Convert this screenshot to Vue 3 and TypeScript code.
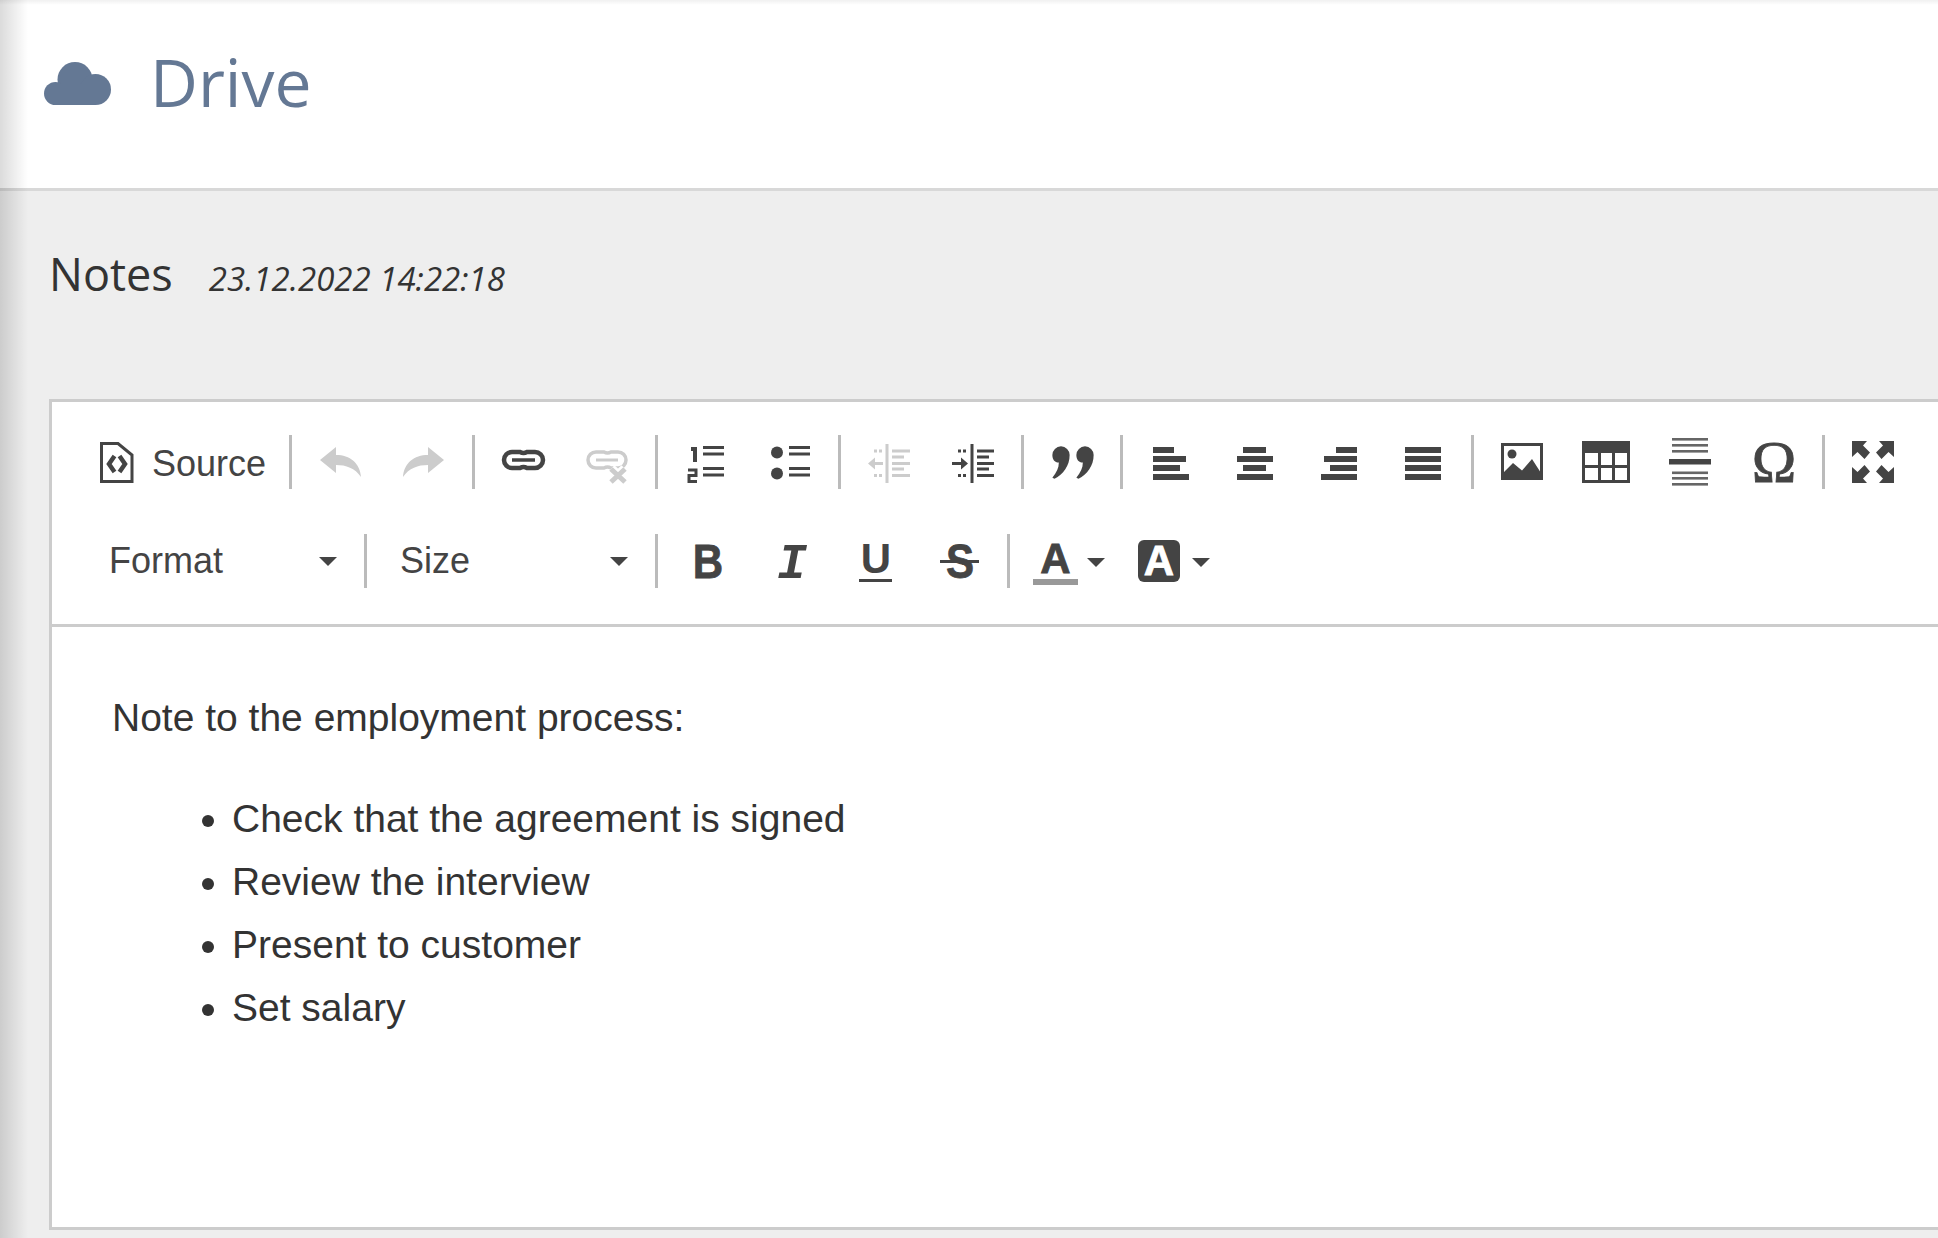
<script setup lang="ts">
  // [x, width] of the four bars in each align icon, in button coordinates
  const alignIcons: [number, number][][] = [
    [[24, 21], [24, 33], [24, 27], [24, 36]],
    [[30, 23], [24, 36], [30, 23], [24, 36]],
    [[39, 21], [27, 33], [33, 27], [24, 36]],
    [[24, 36], [24, 36], [24, 36], [24, 36]],
  ];
  const barTops = [12, 21, 30, 39];
  const hrLines = [3, 9, 15, 36.5, 42, 48];
  const tasks = ['Check that the agreement is signed', 'Review the interview', 'Present to customer', 'Set salary'];
</script>

<template>
  <div class="page">
    <header class="topbar">
      <svg class="cloud" viewBox="0 0 67 43" fill="currentColor">
        <circle cx="31" cy="17.5" r="17.5" />
        <circle cx="51.5" cy="27.5" r="15.5" />
        <circle cx="11.5" cy="31.5" r="11.5" />
        <rect x="11.5" y="22" width="40" height="21" />
      </svg>
      <h1 class="title">Drive</h1>
    </header>

    <main class="content">
      <div class="doc-head">
        <span class="doc-name">Notes</span>
        <span class="doc-date">23.12.2022 14:22:18</span>
      </div>

      <section class="editor">
        <div class="toolbar">
          <div class="row">
            <div class="source">
              <svg class="source-icon" viewBox="0 0 34 54" fill="none" stroke="currentColor">
                <path d="M1.5 8.5 H18 L32 20 V46.5 H1.5 Z" stroke-width="3" />
                <path d="M14.5 21 L9 29 L14.5 37 M19.5 21 L25 29 L19.5 37" stroke-width="4.5" />
              </svg>
              <span class="source-label">Source</span>
            </div>
            <i class="sep"></i>

            <svg class="icon off" viewBox="0 0 84 54" fill="currentColor">
              <path d="M22 25 L38 12 V20 C52 20 62 28 63 42 C57 33 48 30 38 30 V38 Z" />
            </svg>
            <svg class="icon off" viewBox="0 0 84 54" fill="currentColor">
              <path d="M62 25 L46 12 V20 C32 20 22 28 21 42 C27 33 36 30 46 30 V38 Z" />
            </svg>
            <i class="sep"></i>

            <svg class="icon" viewBox="0 0 84 54" fill="none" stroke="currentColor">
              <path d="M31 17 H39 Q42.5 19 46 17 H54 a8 8 0 0 1 0 16 H46 Q42.5 31 39 33 H31 a8 8 0 0 1 0 -16 Z" stroke-width="4.5" />
              <path d="M31 25 H54" stroke-width="3.5" />
            </svg>
            <svg class="icon off" viewBox="0 0 84 54" fill="none" stroke="currentColor">
              <path d="M31 17 H39 Q42.5 19 46 17 H53 a8 8 0 0 1 0 16 H46 Q42.5 31 39 33 H31 a8 8 0 0 1 0 -16 Z" stroke-width="3.5" />
              <path d="M31 25 H53" stroke-width="3" />
              <path d="M46 34 L60 47 M60 34 L46 47" stroke="#fff" stroke-width="10" />
              <path d="M46 34 L60 47 M60 34 L46 47" stroke-width="5" />
            </svg>
            <i class="sep"></i>

            <svg class="icon" viewBox="0 0 84 54" fill="none" stroke="currentColor" stroke-width="3">
              <path d="M39 12.5 H60 M39 19 H60 M39 33.5 H60 M39 40 H60" />
              <path d="M27 14 H31 V27" stroke-width="4" />
              <path d="M24 35 H32 V40.5 H25 V46.5 H33" />
            </svg>
            <svg class="icon" viewBox="0 0 84 54" fill="currentColor">
              <circle cx="29" cy="17.5" r="6" />
              <circle cx="29" cy="38.5" r="6" />
              <path d="M41 12.5 H62 M41 19 H62 M41 33.5 H62 M41 40 H62" stroke="currentColor" stroke-width="3" />
            </svg>
            <i class="sep"></i>

            <svg class="icon off" viewBox="0 0 84 54" fill="currentColor">
              <rect x="38.5" y="9" width="3" height="39" />
              <path d="M45 16 H63 M45 22 H57 M45 28.5 H63 M45 34 H57 M45 40.5 H63" stroke="currentColor" stroke-width="3" />
              <path d="M21 28.5 L28 22.5 V27 H36 V30 H28 V34.5 Z" />
              <path d="M27 14.5 h3 v3 h-3 z M32 14.5 h3 v3 h-3 z M27 39 h3 v3 h-3 z M32 39 h3 v3 h-3 z" />
            </svg>
            <svg class="icon" viewBox="0 0 84 54" fill="currentColor">
              <rect x="39.5" y="9" width="3" height="39" />
              <path d="M46 16 H63 M46 22 H58 M46 28.5 H63 M46 34 H58 M46 40.5 H63" stroke="currentColor" stroke-width="3" />
              <path d="M37 28.5 L30 22.5 V27 H21 V30 H30 V34.5 Z" />
              <path d="M27 14.5 h3 v3 h-3 z M32 14.5 h3 v3 h-3 z M27 39 h3 v3 h-3 z M32 39 h3 v3 h-3 z" />
            </svg>
            <i class="sep"></i>

            <svg class="icon" viewBox="0 0 84 54" fill="currentColor">
              <path transform="translate(31 20) scale(1.08)" d="M-8 0 a8 8 0 1 1 16 0 c0 10 -6 18 -14 22 l-2 -1 c4 -5 6 -9 6 -14 c-4 0 -6 -3 -6 -7 z" />
              <path transform="translate(55 20) scale(1.08)" d="M-8 0 a8 8 0 1 1 16 0 c0 10 -6 18 -14 22 l-2 -1 c4 -5 6 -9 6 -14 c-4 0 -6 -3 -6 -7 z" />
            </svg>
            <i class="sep"></i>

            <svg v-for="(bars, i) in alignIcons" :key="i" class="icon" viewBox="0 0 84 54" fill="currentColor">
              <rect v-for="(bar, j) in bars" :key="j" :x="bar[0]" :y="barTops[j]" :width="bar[1]" height="6" />
            </svg>
            <i class="sep"></i>

            <svg class="icon" viewBox="0 0 84 54" fill="currentColor">
              <rect x="22.5" y="9.5" width="39" height="34" fill="none" stroke="currentColor" stroke-width="3" />
              <circle cx="32" cy="19" r="4.5" />
              <path d="M23 42 V38 L33 28 L42 35.5 L52 24 L61 38 V42 Z" />
            </svg>
            <svg class="icon" viewBox="0 0 84 54" fill="currentColor">
              <path fill-rule="evenodd" d="M18 6 H66 V48 H18 Z M21 18 V30 H34 V18 Z M37 18 V30 H48 V18 Z M51 18 V30 H63 V18 Z M21 33 V45 H34 V33 Z M37 33 V45 H48 V33 Z M51 33 V45 H63 V33 Z" />
            </svg>
            <svg class="icon" viewBox="0 0 84 54" fill="currentColor">
              <rect v-for="y in hrLines" :key="y" x="24" :y="y" width="36" height="2.6" fill="#666" />
              <rect x="21" y="24" width="42" height="5.5" />
            </svg>
            <span class="char omega">Ω</span>
            <i class="sep"></i>

            <svg class="icon" viewBox="0 0 84 54" fill="currentColor">
              <path d="M21 6 H36 L32 10.5 L39 17.5 L33.5 24 L26.5 17 L21 22 Z" />
              <path d="M63 6 H48 L52 10.5 L45 17.5 L50.5 24 L57.5 17 L63 22 Z" />
              <path d="M21 48 H36 L32 43.5 L39 36.5 L33.5 30 L26.5 37 L21 32 Z" />
              <path d="M63 48 H48 L52 43.5 L45 36.5 L50.5 30 L57.5 37 L63 32 Z" />
            </svg>
          </div>

          <div class="row">
            <div class="combo combo-format">
              <span>Format</span>
              <i class="caret"></i>
            </div>
            <i class="sep"></i>
            <div class="combo combo-size">
              <span>Size</span>
              <i class="caret"></i>
            </div>
            <i class="sep"></i>

            <svg class="icon nudge" viewBox="0 0 84 54" fill="currentColor">
              <text class="glyph bold" transform="translate(42 44) scale(0.86 1)" text-anchor="middle" stroke="currentColor" stroke-width="0.8">B</text>
            </svg>
            <span class="char slab">I</span>
            <svg class="icon" viewBox="0 0 84 54" fill="currentColor">
              <text class="glyph bold small" x="42" y="39" text-anchor="middle">U</text>
              <rect x="25" y="45" width="33" height="3" />
            </svg>
            <svg class="icon" viewBox="0 0 84 54" fill="currentColor">
              <text class="glyph bold" transform="translate(42 44) scale(0.86 1)" text-anchor="middle" stroke="currentColor" stroke-width="0.8">S</text>
              <rect x="22" y="26" width="39" height="3" />
            </svg>
            <i class="sep tight"></i>

            <svg class="icon wide" viewBox="0 0 100 54" fill="currentColor">
              <text class="glyph bold small" x="39.5" y="39" text-anchor="middle" stroke="currentColor" stroke-width="0.8">A</text>
              <rect x="17" y="45" width="45" height="6" fill="#999" />
              <path d="M71 24 H89 L80 33 Z" />
            </svg>
            <svg class="icon wide" viewBox="0 0 100 54" fill="currentColor">
              <rect x="22" y="6" width="42" height="42" rx="6" />
              <text class="glyph bold small" x="43" y="41" text-anchor="middle" fill="#fff" stroke="#fff" stroke-width="0.8">A</text>
              <path d="M76 24 H94 L85 33 Z" />
            </svg>
          </div>
        </div>

        <div class="body">
          <p>Note to the employment process:</p>
          <ul>
            <li v-for="task in tasks" :key="task">{{ task }}</li>
          </ul>
        </div>
      </section>
    </main>
  </div>
</template>

<style>
  body {
    background: #eee;
  }
</style>

<style scoped>
  .page {
    position: relative;
    height: 1238px;
    overflow: hidden;
    display: flex;
    flex-direction: column;
    background: #eee;
    font-family: 'Open Sans', sans-serif;
    color: #333;
  }

  /* soft shadow along the left and top edges */
  .page::before,
  .page::after {
    content: '';
    position: absolute;
    left: 0;
    top: 0;
    pointer-events: none;
  }

  .page::before {
    width: 28px;
    height: 100%;
    background: linear-gradient(to right, rgba(0, 0, 0, 0.14), rgba(0, 0, 0, 0));
  }

  .page::after {
    width: 100%;
    height: 5px;
    background: linear-gradient(to bottom, rgba(0, 0, 0, 0.06), rgba(0, 0, 0, 0));
  }

  .topbar {
    display: flex;
    align-items: center;
    height: 188px;
    padding-left: 44px;
    background: #fff;
    border-bottom: 3px solid #d8d8d8;
    color: #647894;
    flex: none;
  }

  .cloud {
    width: 67px;
    height: 43px;
    margin-top: -21px;
  }

  .title {
    margin: -27px 0 0 39px;
    font-size: 66px;
    font-weight: 400;
    line-height: 80px;
  }

  .content {
    flex: 1;
    display: flex;
    flex-direction: column;
    padding: 52px 0 8px 49px;
    min-height: 0;
  }

  .doc-head {
    display: flex;
    align-items: baseline;
    gap: 36px;
    height: 60px;
    margin-bottom: 96px;
    flex: none;
  }

  .doc-name {
    font-size: 45px;
  }

  .doc-date {
    font-size: 33px;
    font-style: italic;
  }

  .editor {
    flex: 1;
    display: flex;
    flex-direction: column;
    background: #fff;
    border: 3px solid #ccc;
    border-right: 0;
    font-family: 'Liberation Sans', Arial, sans-serif;
  }

  .toolbar {
    display: flex;
    flex-direction: column;
    gap: 45px;
    padding: 33px 0 36px 48px;
    border-bottom: 3px solid #ccc;
    color: #444;
    flex: none;
  }

  .row {
    display: flex;
    align-items: stretch;
    height: 54px;
  }

  .sep {
    flex: none;
    width: 3px;
    margin: 0 6px;
    background: #bbb;
  }

  .sep.tight {
    margin-left: 5px;
  }

  .icon {
    flex: none;
    width: 84px;
    height: 54px;
    color: #444;
  }

  .icon.wide {
    width: 100px;
  }

  .icon.off {
    color: #ccc;
  }

  .icon.nudge {
    margin-left: 2px;
  }

  .char {
    flex: none;
    width: 84px;
    height: 54px;
    line-height: 54px;
    text-align: center;
    color: #444;
  }

  .omega {
    font-family: 'Liberation Serif', serif;
    font-size: 60px;
    -webkit-text-stroke: 0.8px #444;
  }

  .slab {
    font-family: 'Liberation Mono', monospace;
    font-size: 50px;
    font-style: italic;
    font-weight: 700;
    padding-top: 4px;
    height: 50px;
  }

  .source {
    display: flex;
    align-items: center;
    gap: 18px;
    width: 183px;
    font-size: 36px;
    flex: none;
  }

  .source-icon {
    width: 34px;
    height: 54px;
    flex: none;
  }

  .source-label {
    padding-top: 4px;
  }

  .combo {
    display: flex;
    align-items: center;
    justify-content: space-between;
    font-size: 36px;
    flex: none;
  }

  .combo-format {
    width: 228px;
    margin-left: 9px;
    margin-right: 21px;
  }

  .combo-size {
    width: 228px;
    margin-left: 27px;
    margin-right: 21px;
  }

  .caret {
    width: 0;
    height: 0;
    border-left: 9px solid transparent;
    border-right: 9px solid transparent;
    border-top: 9px solid #444;
  }

  .glyph {
    font-family: 'Liberation Sans', Arial, sans-serif;
    font-size: 49px;
  }

  .glyph.bold {
    font-weight: 700;
  }

  .glyph.small {
    font-size: 42px;
  }

  .body {
    flex: 1;
    padding: 59px 0 0 60px;
    font-size: 39px;
    line-height: 63px;
    color: #333;
  }

  .body p {
    margin: 0 0 38px;
  }

  .body ul {
    margin: 0;
    padding-left: 120px;
  }
</style>
